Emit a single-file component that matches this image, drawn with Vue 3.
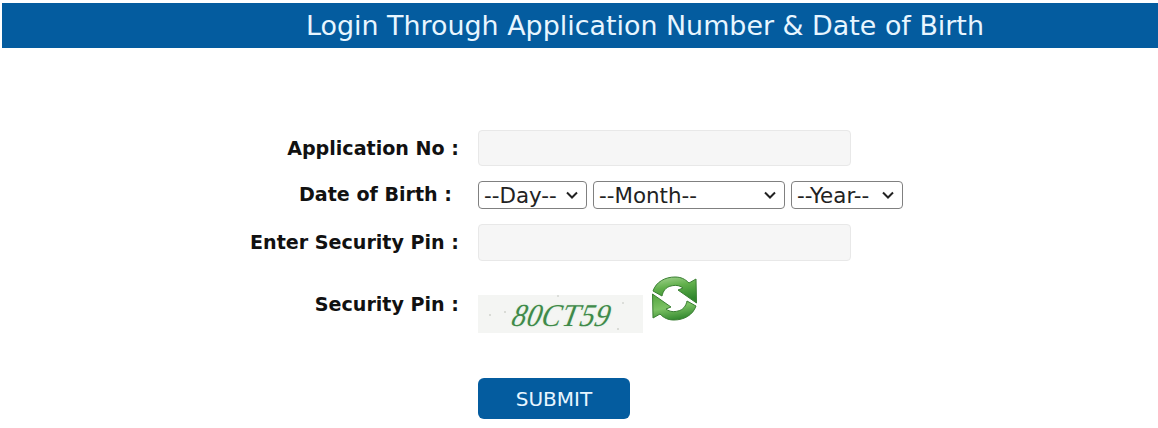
<script setup>
const days = ['--Day--']
const months = ['--Month--']
const years = ['--Year--']
</script>

<template>
  <div class="page">
    <header class="banner"><h1>Login Through Application Number &amp; Date of Birth</h1></header>
    <form class="form" @submit.prevent>
      <div class="row row-app">
        <label class="label">Application No :</label>
        <input class="field" type="text" />
      </div>
      <div class="row row-dob">
        <label class="label label-dob">Date of Birth :</label>
        <div class="selects">
          <select class="sel sel-day"><option v-for="d in days" :key="d">{{ d }}</option></select>
          <select class="sel sel-month"><option v-for="m in months" :key="m">{{ m }}</option></select>
          <select class="sel sel-year"><option v-for="y in years" :key="y">{{ y }}</option></select>
        </div>
      </div>
      <div class="row row-pin">
        <label class="label">Enter Security Pin :</label>
        <input class="field" type="text" />
      </div>
      <div class="row row-captcha">
        <label class="label label-captcha">Security Pin :</label>
        <div class="captcha-wrap">
          <div class="captcha"><span>80CT59</span></div>
          <svg class="refresh" viewBox="0 0 46 46" width="46" height="46" aria-label="Refresh">
            <defs>
              <linearGradient id="g1" x1="0" y1="0" x2="0.3" y2="1">
                <stop offset="0" stop-color="#a9d697" />
                <stop offset="0.45" stop-color="#62b04c" />
                <stop offset="1" stop-color="#2f862c" />
              </linearGradient>
              <linearGradient id="g2" x1="0.7" y1="1" x2="0.4" y2="0">
                <stop offset="0" stop-color="#58a843" />
                <stop offset="0.5" stop-color="#7cc264" />
                <stop offset="1" stop-color="#2f862c" />
              </linearGradient>
            </defs>
            <path d="M1 15 C4 6 13 1 23 1 C29 1 33 3 37 7 L44 3 L44.5 27 L26 14 L31 12 C27 9 23 9 19 10 C14 11 11 15 10 20 Z" fill="url(#g1)" stroke="#3a7f33" stroke-width="1" stroke-linejoin="round" />
            <path d="M1 15 C4 6 13 1 23 1 C29 1 33 3 37 7 L44 3 L44.5 27 L26 14 L31 12 C27 9 23 9 19 10 C14 11 11 15 10 20 Z" transform="rotate(180 22.5 22.5)" fill="url(#g2)" stroke="#3a7f33" stroke-width="1" stroke-linejoin="round" />
          </svg>
        </div>
      </div>
      <div class="row row-submit">
        <span class="label"></span>
        <button class="submit" type="submit">SUBMIT</button>
      </div>
    </form>
  </div>
</template>

<style scoped>
.page {
  height: 428px;
  box-sizing: border-box;
  padding: 3px 0 0 2px;
  font-family: "DejaVu Sans", Verdana, sans-serif;
  color: #111;
  overflow: hidden;
}
.banner {
  height: 45px;
  background: #045c9f;
  display: flex;
  align-items: center;
  justify-content: center;
  padding-left: 130px;
}
.banner h1 {
  margin: 0;
  color: #e8f6ff;
  font-size: 26.9px;
  font-weight: 400;
  white-space: nowrap;
}
.form {
  padding-top: 82px;
}
.row {
  display: grid;
  grid-template-columns: 457px auto;
  column-gap: 19px;
  align-items: center;
  justify-content: start;
}
.label {
  text-align: right;
  font-size: 19.1px;
  font-weight: 700;
  white-space: nowrap;
}
.label-dob {
  padding-right: 7px;
  position: relative;
  top: -1px;
}
.field {
  display: block;
  width: 373px;
  height: 36px;
  box-sizing: border-box;
  border: 1px solid #e8e8e8;
  border-radius: 4px;
  background: #f6f6f6;
  margin: 0;
}
.row-dob { margin-top: 15px; }
.row-pin { margin-top: 15px; }
.row-pin .field { height: 37px; }
.row-captcha { margin-top: 15px; align-items: start; }
.label-captcha { padding-top: 17px; }
.selects {
  display: flex;
  gap: 6px;
}
.sel {
  height: 28px;
  box-sizing: border-box;
  appearance: none;
  font-family: inherit;
  font-size: 21.4px;
  line-height: 26px;
  color: #222;
  background: #fff url("data:image/svg+xml,%3Csvg xmlns='http://www.w3.org/2000/svg' viewBox='0 0 12 8'%3E%3Cpath d='M1 1.5 L6 6.5 L11 1.5' fill='none' stroke='%23222' stroke-width='2'/%3E%3C/svg%3E") no-repeat right 8px center / 12px 8px;
  border: 1px solid #808080;
  border-radius: 4px;
  padding: 1px 0 0 5px;
  margin: 0;
}
.sel-day { width: 109px; }
.sel-month { width: 192px; }
.sel-year { width: 112px; }
.captcha-wrap {
  display: flex;
  align-items: flex-start;
  gap: 9px;
}
.captcha {
  margin-top: 19px;
  width: 165px;
  height: 38px;
  background-color: #f4f5f3;
  background-image:
    radial-gradient(circle at 12px 20px, #d9dbd6 1px, transparent 1.5px),
    radial-gradient(circle at 27px 17px, #d9dbd6 1px, transparent 1.5px),
    radial-gradient(circle at 145px 8px, #dcdeda 1px, transparent 1.5px),
    radial-gradient(circle at 140px 34px, #d9dbd6 1px, transparent 1.5px),
    radial-gradient(circle at 80px 1px, #dcdeda 1px, transparent 1.5px);
  display: flex;
  align-items: center;
  justify-content: center;
  padding-left: 4px;
  padding-top: 2px;
  box-sizing: border-box;
}
.captcha span {
  font-family: "Liberation Serif", serif;
  font-size: 29px;
  font-weight: 400;
  color: #3f8a4a;
  letter-spacing: 0.5px;
  display: inline-block;
  transform: skewX(-20deg) scaleY(1.1);
  text-shadow: 0 0 2px #cfe8cf;
}
.refresh {
  display: block;
}
.row-submit { margin-top: 45px; }
.submit {
  display: block;
  width: 152px;
  height: 41px;
  border: none;
  border-radius: 6px;
  background: #045c9f;
  color: #e8f6ff;
  font-family: inherit;
  font-size: 20px;
  padding: 0;
  margin: 0;
}
</style>
